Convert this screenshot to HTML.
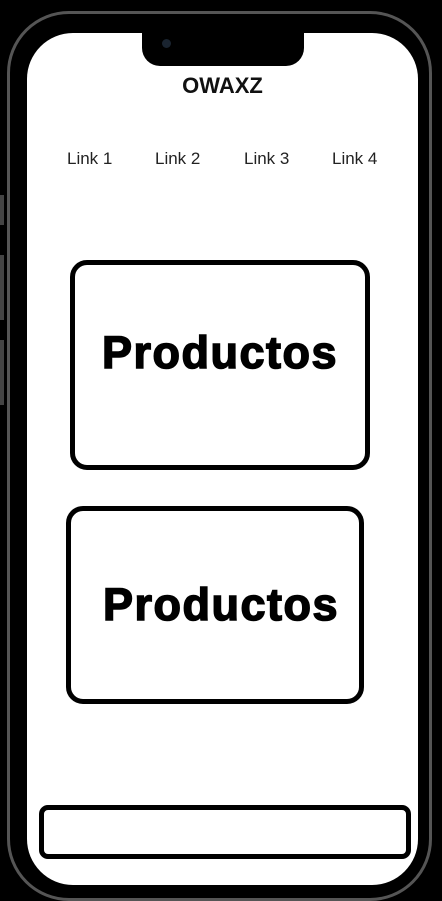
<!DOCTYPE html>
<html><head><style>
body{margin:0;width:442px;height:894px;background:#000;position:relative;overflow:hidden;font-family:"Liberation Sans",Arial,sans-serif}
.frame{position:absolute;left:7px;top:11px;width:425px;height:890px;border:3px solid #555;border-radius:62px;box-sizing:border-box}
.screen{position:absolute;left:27px;top:33px;width:391px;height:852px;background:#fff;border-radius:46px;overflow:hidden}
.notch{position:absolute;left:115px;top:0;width:162px;height:33px;background:#000;border-radius:0 0 18px 18px}
.cam{position:absolute;left:20px;top:6px;width:9px;height:9px;border-radius:50%;background:#1a2430}
.title{position:absolute;top:40px;left:0;width:100%;text-align:center;font-weight:bold;font-size:22px;color:#111}
.links{position:absolute;top:116px;font-size:17px;color:#222}
.box{position:absolute;border:5px solid #000;border-radius:17px;box-sizing:border-box;display:flex;align-items:center;justify-content:center;font-weight:bold;font-size:45px;color:#000;letter-spacing:1.5px;-webkit-text-stroke:1.5px #000}
.bar{position:absolute;left:12px;top:772px;width:372px;height:54px;border:5px solid #000;border-radius:9px;box-sizing:border-box}
.side{position:absolute;left:0;width:4px;background:#444}
</style></head><body>
<div class="side" style="top:195px;height:30px"></div>
<div class="side" style="top:255px;height:65px"></div>
<div class="side" style="top:340px;height:65px"></div>
<div class="frame"></div>
<div class="screen">
<div class="notch"><div class="cam"></div></div>
<div class="title">OWAXZ</div>
<div class="links" style="left:40px">Link 1</div>
<div class="links" style="left:128px">Link 2</div>
<div class="links" style="left:217px">Link 3</div>
<div class="links" style="left:305px">Link 4</div>
<div class="box" style="left:43px;top:227px;width:300px;height:210px;padding-bottom:24px">Productos</div>
<div class="box" style="left:39px;top:473px;width:298px;height:198px;padding-left:12px">Productos</div>
<div class="bar"></div>
</div>
</body></html>
